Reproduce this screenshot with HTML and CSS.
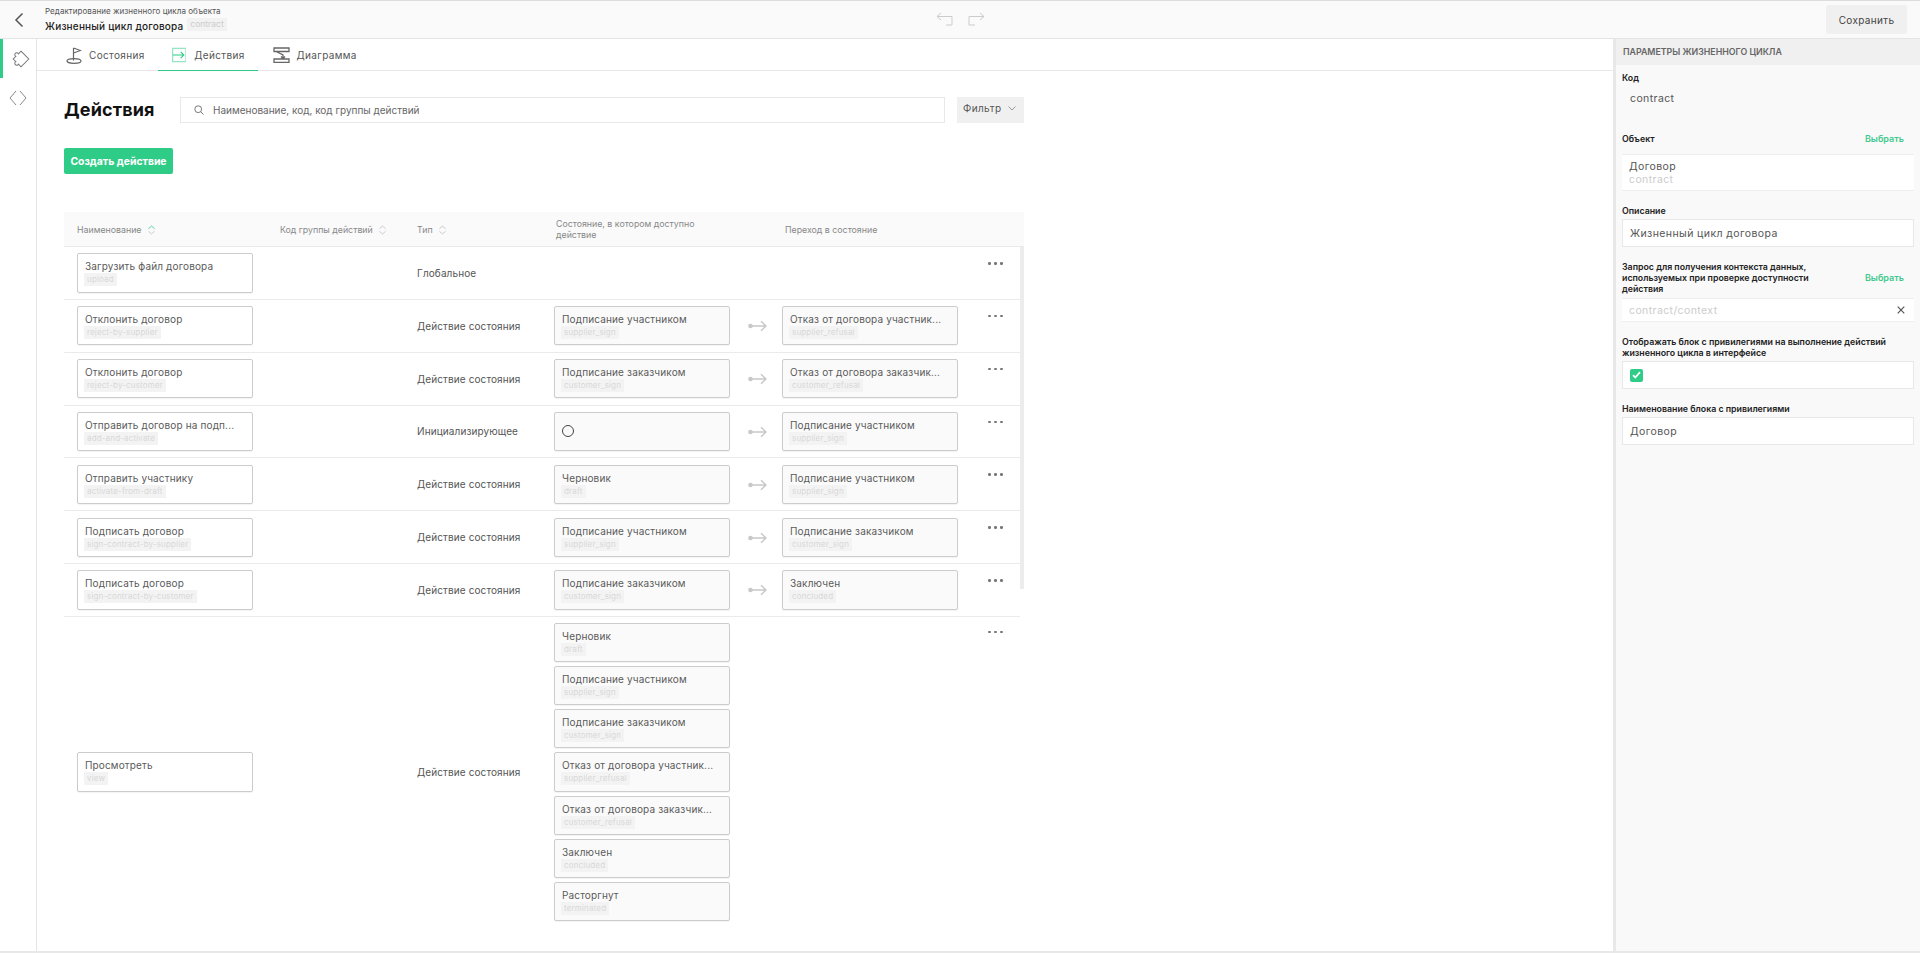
FILE: index.html
```html
<!DOCTYPE html>
<html lang="ru">
<head>
  <meta charset="UTF-8" />
  <title>Жизненный цикл договора</title>
  <link rel="stylesheet" href="styles.css">
</head>
<body>

  <svg class="sprites" width="0" height="0">
    <symbol id="flow-arrow" viewBox="0 0 19 12">
      <circle cx="2.5" cy="6" r="2.3" fill="#c8c8c8"/>
      <path d="M2 6h16M13 1.2 18 6l-5 4.800" fill="none" stroke="#c8c8c8" stroke-width="1.4"/>
    </symbol>
    <symbol id="sort-arrows" viewBox="0 0 8 11">
      <path d="M.5 4 4 1l3.500 3M.5 7 4 10l3.500-3" fill="none" stroke="#c4c4c4"/>
    </symbol>
  </svg>

  <header class="topbar">
    <a class="back" href="#">
      <svg width="10" height="16" viewBox="0 0 10 16"><path d="M8.5 1.500 2 8l6.500 6.500" fill="none" stroke="#555" stroke-width="1.5"/></svg>
    </a>
    <div class="page-title">
      <div class="page-caption">Редактирование жизненного цикла объекта</div>
      <div class="page-name">Жизненный цикл договора <span class="tag">contract</span></div>
    </div>
    <div class="history">
      <svg width="17" height="14" viewBox="0 0 17 14"><path d="M5 1 1 4.500 5 8M1 4.500h15v8.500h-6" fill="none" stroke="#ccc"/></svg>
      <svg width="17" height="14" viewBox="0 0 17 14"><path d="M12 1l4 3.500L12 8M16 4.500H1v8.500h6" fill="none" stroke="#ccc"/></svg>
    </div>
    <button class="save-btn">Сохранить</button>
  </header>

  <div class="layout">
    <nav class="sidebar">
      <a class="side-item active" href="#">
        <svg width="20" height="20" viewBox="0 0 20 20"><path d="M4.500 4.500H15.500V15.500H11.800a1.900 1.900 0 1 1-3.600 0H4.500V11.800a1.900 1.900 0 1 1 0-3.600V4.500z" transform="translate(1 0) rotate(45 10 10)" fill="none" stroke="#777"/></svg>
      </a>
      <a class="side-item" href="#">
        <svg width="18" height="16" viewBox="0 0 18 16"><path d="M7 1 1 8l6 7M11 1l6 7-6 7" fill="none" stroke="#888"/></svg>
      </a>
    </nav>

    <main class="content">
      <div class="tabs">
        <a class="tab" href="#">
          <svg width="16" height="17" viewBox="0 0 16 17"><path d="M7.500 1v12.500M7.500 1l7 2.500-7 2.500" fill="none" stroke="#666" stroke-width="1.2"/><ellipse cx="8" cy="14" rx="7" ry="2.300" fill="none" stroke="#666" stroke-width="1.2"/></svg>
          Состояния
        </a>
        <a class="tab active" href="#">
          <svg width="16" height="16" viewBox="0 0 16 16"><rect x=".7" y=".7" width="14.600" height="14.600" fill="none" stroke="#8fe3c0" stroke-width="1.3"/><path d="M1 8h12M9.500 4.500 13 8l-3.500 3.500" fill="none" stroke="#2ecc87" stroke-width="1.2"/></svg>
          Действия
        </a>
        <a class="tab" href="#">
          <svg width="17" height="16" viewBox="0 0 17 16"><path d="M1 1h15v3.500H1zM1 12h15v3.500H1zM3 4.500l7 3.500v3M8 9.500l2 2 2-2" fill="none" stroke="#666" stroke-width="1.3"/></svg>
          Диаграмма
        </a>
      </div>

      <div class="actions-page">
        <div class="toolbar">
          <h1>Действия</h1>
          <label class="search">
            <svg width="10" height="10" viewBox="0 0 10 10"><circle cx="4.200" cy="4.200" r="3.400" fill="none" stroke="#777"/><path d="m6.700 6.700 2.800 2.800" stroke="#777"/></svg>
            <span>Наименование, код, код группы действий</span>
          </label>
          <button class="filter-btn">Фильтр
            <svg width="8" height="5" viewBox="0 0 8 5"><path d="M.5.500 4 4 7.500.5" fill="none" stroke="#999"/></svg>
          </button>
        </div>

        <button class="create-btn">Создать действие</button>

        <div class="table">
          <div class="row head">
            <div>Наименование
              <svg class="sort" width="7" height="10" viewBox="0 0 8 11"><path d="M.5 4 4 1l3.500 3" fill="none" stroke="#3fcf94"/><path d="M.5 7 4 10l3.500-3" fill="none" stroke="#c4c4c4"/></svg>
            </div>
            <div>Код группы действий
              <svg class="sort" width="7" height="10"><use href="#sort-arrows"/></svg>
            </div>
            <div>Тип
              <svg class="sort" width="7" height="10"><use href="#sort-arrows"/></svg>
            </div>
            <div class="head-state">Состояние, в котором доступно действие</div>
            <div class="head-target">Переход в состояние</div>
          </div>

          <div class="rows">
            <div class="scrollbar"></div>

            <div class="row">
              <div class="card name"><div class="card-title">Загрузить файл договора</div><span class="code">upload</span></div>
              <div></div>
              <div class="type">Глобальное</div>
              <div></div>
              <div></div>
              <div class="dots"><i></i><i></i><i></i></div>
            </div>

            <div class="row">
              <div class="card name"><div class="card-title">Отклонить договор</div><span class="code">reject-by-supplier</span></div>
              <div></div>
              <div class="type">Действие состояния</div>
              <div class="state-cell"><div class="card"><div class="card-title">Подписание участником</div><span class="code">supplier_sign</span></div>
                <svg class="arrow" width="19" height="12"><use href="#flow-arrow"/></svg></div>
              <div class="card"><div class="card-title">Отказ от договора участник...</div><span class="code">supplier_refusal</span></div>
              <div class="dots"><i></i><i></i><i></i></div>
            </div>

            <div class="row">
              <div class="card name"><div class="card-title">Отклонить договор</div><span class="code">reject-by-customer</span></div>
              <div></div>
              <div class="type">Действие состояния</div>
              <div class="state-cell"><div class="card"><div class="card-title">Подписание заказчиком</div><span class="code">customer_sign</span></div>
                <svg class="arrow" width="19" height="12"><use href="#flow-arrow"/></svg></div>
              <div class="card"><div class="card-title">Отказ от договора заказчик...</div><span class="code">customer_refusal</span></div>
              <div class="dots"><i></i><i></i><i></i></div>
            </div>

            <div class="row">
              <div class="card name"><div class="card-title">Отправить договор на подп...</div><span class="code">add-and-activate</span></div>
              <div></div>
              <div class="type">Инициализирующее</div>
              <div class="state-cell"><div class="card initial"><span class="ring"></span></div>
                <svg class="arrow" width="19" height="12"><use href="#flow-arrow"/></svg></div>
              <div class="card"><div class="card-title">Подписание участником</div><span class="code">supplier_sign</span></div>
              <div class="dots"><i></i><i></i><i></i></div>
            </div>

            <div class="row">
              <div class="card name"><div class="card-title">Отправить участнику</div><span class="code">activate-from-draft</span></div>
              <div></div>
              <div class="type">Действие состояния</div>
              <div class="state-cell"><div class="card"><div class="card-title">Черновик</div><span class="code">draft</span></div>
                <svg class="arrow" width="19" height="12"><use href="#flow-arrow"/></svg></div>
              <div class="card"><div class="card-title">Подписание участником</div><span class="code">supplier_sign</span></div>
              <div class="dots"><i></i><i></i><i></i></div>
            </div>

            <div class="row">
              <div class="card name"><div class="card-title">Подписать договор</div><span class="code">sign-contract-by-supplier</span></div>
              <div></div>
              <div class="type">Действие состояния</div>
              <div class="state-cell"><div class="card"><div class="card-title">Подписание участником</div><span class="code">supplier_sign</span></div>
                <svg class="arrow" width="19" height="12"><use href="#flow-arrow"/></svg></div>
              <div class="card"><div class="card-title">Подписание заказчиком</div><span class="code">customer_sign</span></div>
              <div class="dots"><i></i><i></i><i></i></div>
            </div>

            <div class="row">
              <div class="card name"><div class="card-title">Подписать договор</div><span class="code">sign-contract-by-customer</span></div>
              <div></div>
              <div class="type">Действие состояния</div>
              <div class="state-cell"><div class="card"><div class="card-title">Подписание заказчиком</div><span class="code">customer_sign</span></div>
                <svg class="arrow" width="19" height="12"><use href="#flow-arrow"/></svg></div>
              <div class="card"><div class="card-title">Заключен</div><span class="code">concluded</span></div>
              <div class="dots"><i></i><i></i><i></i></div>
            </div>

            <div class="row last">
              <div class="card name"><div class="card-title">Просмотреть</div><span class="code">view</span></div>
              <div></div>
              <div class="type">Действие состояния</div>
              <div class="state-list">
                <div class="card"><div class="card-title">Черновик</div><span class="code">draft</span></div>
                <div class="card"><div class="card-title">Подписание участником</div><span class="code">supplier_sign</span></div>
                <div class="card"><div class="card-title">Подписание заказчиком</div><span class="code">customer_sign</span></div>
                <div class="card"><div class="card-title">Отказ от договора участник...</div><span class="code">supplier_refusal</span></div>
                <div class="card"><div class="card-title">Отказ от договора заказчик...</div><span class="code">customer_refusal</span></div>
                <div class="card"><div class="card-title">Заключен</div><span class="code">concluded</span></div>
                <div class="card"><div class="card-title">Расторгнут</div><span class="code">terminated</span></div>
              </div>
              <div></div>
              <div class="dots"><i></i><i></i><i></i></div>
            </div>
          </div>
        </div>
      </div>
    </main>

    <aside class="panel">
      <div class="panel-title">Параметры жизненного цикла</div>
      <div class="panel-body">
        <div class="field field-code">
          <div class="field-label">Код</div>
          <div class="plain-value">contract</div>
        </div>
        <div class="field field-object">
          <div class="field-head"><div class="field-label">Объект</div><a class="pick" href="#">Выбрать</a></div>
          <div class="picked">
            <div>Договор</div>
            <div class="muted">contract</div>
          </div>
        </div>
        <div class="field">
          <div class="field-label">Описание</div>
          <div class="input">Жизненный цикл договора</div>
        </div>
        <div class="field field-query">
          <div class="field-head">
            <div class="field-label wide">Запрос для получения контекста данных, используемых при проверке доступности действия</div>
            <a class="pick" href="#">Выбрать</a>
          </div>
          <div class="picked single">
            <span class="muted">contract/context</span>
            <svg width="8" height="8" viewBox="0 0 8 8"><path d="m.7.700 6.600 6.600M7.300.7.700 7.300" stroke="#555" stroke-width="1.2"/></svg>
          </div>
        </div>
        <div class="field">
          <div class="field-label">Отображать блок с привилегиями на выполнение действий жизненного цикла в интерфейсе</div>
          <div class="input check-input">
            <span class="checkbox">
              <svg width="9" height="8" viewBox="0 0 9 8"><path d="M1 4.200 3.300 6.500 8 1.200" fill="none" stroke="#fff" stroke-width="1.8"/></svg>
            </span>
          </div>
        </div>
        <div class="field">
          <div class="field-label">Наименование блока с привилегиями</div>
          <div class="input">Договор</div>
        </div>
      </div>
    </aside>
  </div>

</body>
</html>
```

FILE: styles.css
```css
* {
  box-sizing: border-box;
}
html, body {
  margin: 0;
  height: 953px;
  overflow: hidden;
}
body {
  font-family: Inter, "Noto Sans", sans-serif;
  color: #444;
  background: #fff;
  border-top: 1px solid #ddd;
  border-bottom: 2px solid #e8e8e8;
}
a {
  color: inherit;
  text-decoration: none;
}
button {
  font-family: inherit;
  border: none;
  cursor: pointer;
}
.sprites {
  display: block;
  height: 0;
}

/* top bar */
.topbar {
  display: flex;
  align-items: center;
  height: 38px;
  background: #fafafa;
  border-bottom: 1px solid #e4e4e4;
}
.back {
  display: flex;
  width: 45px;
  padding-left: 14px;
}
.page-title {
  width: 300px;
  padding-top: 1px;
}
.page-caption {
  font-size: 8px;
  line-height: 11px;
  color: #555;
  letter-spacing: .05px;
}
.page-name {
  margin-top: 1px;
  font-size: 10px;
  line-height: 15px;
  font-weight: 500;
  color: #222;
  letter-spacing: .2px;
}
.tag {
  display: inline-block;
  vertical-align: 3px;
  padding: 0 3px;
  margin-left: 1px;
  font-size: 8.5px;
  line-height: 13px;
  font-weight: 400;
  letter-spacing: 0;
  color: #ccc;
  background: #f2f2f2;
}
.history {
  display: flex;
  gap: 15px;
  margin: -2px 0 0 591px;
}
.save-btn {
  margin-left: auto;
  margin-right: 13px;
  width: 81px;
  height: 29px;
  font-size: 10px;
  letter-spacing: .35px;
  color: #444;
  background: #f0f0f0;
  border-radius: 2px;
}

/* columns */
.layout {
  display: grid;
  grid-template-columns: 37px 1fr 307px;
  height: 912px;
}
.sidebar {
  border-right: 1px solid #e4e4e4;
}
.side-item {
  display: flex;
  justify-content: center;
  align-items: center;
  height: 39px;
}
.side-item.active {
  border-left: 3px solid #2ecc87;
}
.side-item + .side-item {
  height: 40px;
}

/* tabs */
.tabs {
  display: flex;
  height: 32px;
  padding-left: 17px;
  border-bottom: 1px solid #e8e8e8;
}
.tab {
  display: flex;
  align-items: center;
  gap: 7px;
  height: 32px;
  padding: 0 13px 0 12px;
  font-size: 10px;
  letter-spacing: .35px;
  color: #555;
}
.tab.active {
  width: 100px;
  padding-left: 14px;
  gap: 8px;
  border-bottom: 1px solid #2ecc87;
}
.tab.active + .tab {
  padding-left: 15px;
}

/* actions list */
.actions-page {
  padding: 26px 0 0 27px;
  width: 987px;
}
.toolbar {
  display: flex;
  align-items: center;
}
h1 {
  width: 116px;
  margin: 0;
  font-size: 18px;
  line-height: 26px;
  font-weight: 700;
  letter-spacing: .15px;
  color: #111;
}
.search {
  display: flex;
  align-items: center;
  gap: 9px;
  width: 765px;
  height: 26px;
  padding-left: 13px;
  font-size: 10px;
  color: #666;
  border: 1px solid #e8e8e8;
}
.filter-btn {
  display: flex;
  align-items: center;
  gap: 7px;
  width: 67px;
  height: 26px;
  margin-left: 12px;
  padding: 0 0 4px 6px;
  font-size: 10px;
  letter-spacing: .35px;
  color: #555;
  background: #f0f0f0;
}
.create-btn {
  display: block;
  width: 109px;
  height: 26px;
  margin-top: 25px;
  padding: 0;
  font-size: 10.4px;
  font-weight: 700;
  white-space: nowrap;
  color: #fff;
  background: #2ecc87;
  border-radius: 2px;
}

.table {
  margin-top: 38px;
  width: 960px;
}
.row {
  display: grid;
  grid-template-columns: 203px 137px 137px 228px 177px 1fr;
  align-items: center;
  height: 52.85px;
  padding-left: 13px;
  border-bottom: 1px solid #eaeaea;
}
.row.head {
  height: 35px;
  font-size: 8.8px;
  line-height: 11px;
  color: #888;
  background: #fafafa;
}
.head-state {
  padding-left: 2px;
  width: 170px;
}
.head-target {
  padding-left: 3px;
}
.sort {
  vertical-align: -2px;
  margin-left: 4px;
}
.rows {
  position: relative;
  width: 956px;
}
.scrollbar {
  position: absolute;
  top: 0;
  right: -4px;
  width: 4px;
  height: 342px;
  background: #ececec;
}
.row.last {
  height: auto;
  padding-top: 6px;
  border-bottom: none;
}
.card {
  width: 176px;
  height: 39.2px;
  padding: 5px 7px 0;
  background: #fafafa;
  border: 1px solid #ccc;
  border-radius: 2px;
  box-shadow: 0 1px 1px rgba(0,0,0,.05);
}
.card.name {
  background: #fff;
}
.card-title {
  font-size: 10px;
  line-height: 14px;
  letter-spacing: .15px;
  color: #5a5a5a;
  white-space: nowrap;
}
.code {
  display: block;
  width: fit-content;
  margin-left: -1px;
  padding: 0 3px;
  font-size: 8px;
  line-height: 13px;
  letter-spacing: .02em;
  color: #d8d8d8;
  background: #f3f3f3;
}
.type {
  font-size: 10px;
  letter-spacing: .11px;
  color: #555;
}
.state-cell {
  position: relative;
}
.arrow {
  position: absolute;
  left: 194px;
  top: 14px;
}
.initial {
  display: flex;
  align-items: center;
  padding: 0 7px;
}
.ring {
  width: 12px;
  height: 12px;
  border: 1.6px solid #444;
  border-radius: 50%;
}
.state-list {
  display: flex;
  flex-direction: column;
  gap: 4px;
}
.dots {
  display: flex;
  gap: 3.5px;
  align-self: start;
  padding: 15px 0 0 29px;
}
.row.last .dots {
  padding-top: 8px;
}
.dots i {
  width: 2.5px;
  height: 2.5px;
  background: #777;
  border-radius: 50%;
}

/* parameters panel */
.panel {
  background: #f9f9f9;
  border-left: 3px solid #e8e8e8;
}
.panel-title {
  height: 26px;
  padding-left: 7px;
  font-size: 8.8px;
  line-height: 26px;
  font-weight: 600;
  text-transform: uppercase;
  color: #666;
  background: #f0f0f0;
}
.panel-body {
  padding: 0 6px;
}
.field {
  margin-bottom: 14px;
}
.field-label {
  margin-bottom: 3px;
  font-size: 8.8px;
  line-height: 11px;
  font-weight: 600;
  color: #222;
}
.field-head {
  display: flex;
  justify-content: space-between;
  align-items: center;
  padding-right: 10px;
  margin-bottom: 4px;
}
.field-object .field-head {
  margin-bottom: 10px;
}
.field-head .field-label {
  margin-bottom: 0;
}
.field-label.wide {
  width: 200px;
}
.pick {
  font-size: 9px;
  font-weight: 600;
  color: #42c98f;
}
.field-code {
  padding-top: 7px;
  height: 68px;
  margin-bottom: 0;
}
.plain-value {
  padding: 6px 8px;
  font-size: 10.5px;
  letter-spacing: .4px;
  color: #555;
}
.picked {
  height: 37px;
  padding: 5px 7px;
  font-size: 10.5px;
  line-height: 13px;
  letter-spacing: .4px;
  color: #555;
  background: #fff;
  border-top: 1px solid #eee;
  border-bottom: 1px solid #eee;
}
.picked.single {
  display: flex;
  justify-content: space-between;
  align-items: center;
  height: 24px;
  padding: 0 9px 0 7px;
}
.muted {
  color: #ccc;
}
.input {
  height: 28px;
  padding: 0 7px;
  font-size: 10.5px;
  line-height: 27px;
  letter-spacing: .4px;
  color: #555;
  background: #fff;
  border: 1px solid #e8e8e8;
}
.check-input {
  display: flex;
  align-items: center;
}
.checkbox {
  display: flex;
  justify-content: center;
  align-items: center;
  width: 13px;
  height: 13px;
  background: #2ecc87;
  border-radius: 2px;
}
```
